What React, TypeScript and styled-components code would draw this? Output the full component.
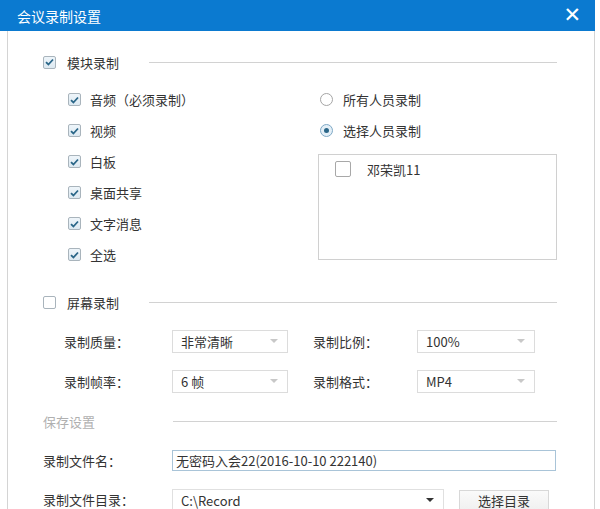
import React from 'react';
import styled, { createGlobalStyle } from 'styled-components';

const GlobalStyle = createGlobalStyle`
  html, body {
    margin: 0;
    padding: 0;
    background: #fff;
  }
  body {
    font-family: 'Noto Sans CJK SC', 'Liberation Sans', sans-serif;
    font-size: 13px;
    color: #333;
  }
`;

const Window = styled.div`
  width: 600px;
  height: 509px;
  overflow: hidden;
  background: #fff;
  display: flex;
  flex-direction: column;
`;

const TitleBar = styled.div`
  width: 595px;
  height: 31px;
  flex-shrink: 0;
  background: #0b7ad0;
  color: #fff;
  display: flex;
  align-items: center;
  justify-content: space-between;
  padding: 0 14px 0 17px;
  box-sizing: border-box;
  font-size: 14px;
`;

const CloseButton = styled.span`
  font-family: 'DejaVu Sans', sans-serif;
  font-size: 21px;
  font-weight: bold;
  line-height: 1;
  cursor: pointer;
`;

const Body = styled.div`
  flex: 1;
  margin-left: 7px;
  width: 588px;
  box-sizing: border-box;
  border-left: 1px solid #d4d4d4;
  border-right: 1px solid #d4d4d4;
  padding: 21px 37px 0 35px;
  display: flex;
  flex-direction: column;
`;

const SectionHeader = styled.div<{ $top?: number }>`
  height: 20px;
  display: flex;
  align-items: center;
  margin-top: ${p => p.$top ?? 0}px;
`;

const SectionTitle = styled.span<{ $muted?: boolean }>`
  color: ${p => (p.$muted ? '#b0b0b0' : '#333')};
  margin-left: ${p => (p.$muted ? 0 : 11)}px;
  white-space: nowrap;
`;

const Rule = styled.div<{ $gap: number }>`
  flex: 1;
  height: 1px;
  background: #d2d2d2;
  margin-left: ${p => p.$gap}px;
`;

const Box = styled.span<{ $checked?: boolean }>`
  width: 13px;
  height: 13px;
  flex-shrink: 0;
  box-sizing: border-box;
  border: 1px solid #a9b4bc;
  border-radius: 2px;
  background: ${p => (p.$checked ? 'linear-gradient(#eef5fa, #dde9f1)' : '#fff')};
  display: inline-flex;
  align-items: center;
  justify-content: center;
`;

function Check({ checked }: { checked?: boolean }) {
  return (
    <Box $checked={checked}>
      {checked && (
        <svg width="9" height="8" viewBox="0 0 9 8">
          <path d="M1 4.2 L3.4 6.5 L8 1.5" fill="none" stroke="#2a6688" strokeWidth="1.8" />
        </svg>
      )}
    </Box>
  );
}

const RadioCircle = styled.span<{ $on?: boolean }>`
  width: 13px;
  height: 13px;
  box-sizing: border-box;
  border-radius: 50%;
  border: 1px solid ${p => (p.$on ? '#7fa9c6' : '#a5a5a5')};
  background: ${p => (p.$on ? '#e4eff7' : '#fff')};
  display: inline-flex;
  align-items: center;
  justify-content: center;
  &::after {
    content: '';
    display: ${p => (p.$on ? 'block' : 'none')};
    width: 5px;
    height: 5px;
    border-radius: 50%;
    background: #2a6688;
  }
`;

const ModuleArea = styled.div`
  display: flex;
  margin-top: 12px;
`;

const LeftColumn = styled.div`
  width: 275px;
  padding-left: 25px;
  box-sizing: border-box;
  display: flex;
  flex-direction: column;
`;

const RightColumn = styled.div`
  flex: 1;
  display: flex;
  flex-direction: column;
`;

const OptionRow = styled.label`
  height: 31px;
  display: flex;
  align-items: center;
  gap: 9px;
  white-space: nowrap;
`;

const RadioRow = styled(OptionRow)`
  padding-left: 2px;
  gap: 10px;
`;

const MemberList = styled.div`
  margin-top: 8px;
  height: 106px;
  border: 1px solid #d0d0d0;
  box-sizing: border-box;
  padding: 6px 0 0 16px;
`;

const MemberRow = styled.div`
  display: flex;
  align-items: center;
  gap: 16px;
  height: 16px;
  ${Box} {
    width: 16px;
    height: 16px;
    border-color: #a8a8a8;
  }
`;

const SettingsRow = styled.div<{ $top: number }>`
  display: flex;
  align-items: center;
  height: 24px;
  margin-top: ${p => p.$top}px;
  padding-left: 21px;
`;

const FieldLabel = styled.span<{ $w: number; $indent?: number }>`
  width: ${p => p.$w}px;
  padding-left: ${p => p.$indent ?? 0}px;
  flex-shrink: 0;
  white-space: nowrap;
`;

const Select = styled.div<{ $w: number }>`
  width: ${p => p.$w}px;
  height: 23px;
  box-sizing: border-box;
  border: 1px solid #dcdcdc;
  display: flex;
  align-items: center;
  justify-content: space-between;
  padding: 0 9px 0 8px;
  flex-shrink: 0;
`;

const Caret = styled.span<{ $dark?: boolean }>`
  width: 0;
  height: 0;
  border-left: 4px solid transparent;
  border-right: 4px solid transparent;
  border-top: 4px solid ${p => (p.$dark ? '#333' : '#c8c8c8')};
`;

const FileRow = styled.div<{ $top: number }>`
  display: flex;
  align-items: center;
  height: 21px;
  margin-top: ${p => p.$top}px;
`;

const TextInput = styled.div`
  flex: 1;
  height: 21px;
  box-sizing: border-box;
  border: 1px solid #a9c4d8;
  display: flex;
  align-items: center;
  padding-left: 3px;
  white-space: nowrap;
  margin-right: 1px;
`;

const PathCombo = styled(Select)`
  height: 21px;
  border-color: #e0e0e0;
  border-bottom: none;
  padding-right: 9px;
`;

const Button = styled.button`
  margin-left: 15px;
  width: 90px;
  height: 24px;
  margin-top: 4px;
  border: 1px solid #d8d8d8;
  border-bottom: none;
  background: linear-gradient(#fafafa, #eeeeee);
  font-family: inherit;
  font-size: 13px;
  color: #333;
  padding: 0 0 4px;
`;

const leftOptions = ['音频（必须录制）', '视频', '白板', '桌面共享', '文字消息', '全选'];

export default function App() {
  return (
    <>
      <GlobalStyle />
      <Window>
        <TitleBar>
          <span>会议录制设置</span>
          <CloseButton>✕</CloseButton>
        </TitleBar>
        <Body>
          <SectionHeader>
            <Check checked />
            <SectionTitle>模块录制</SectionTitle>
            <Rule $gap={30} />
          </SectionHeader>

          <ModuleArea>
            <LeftColumn>
              {leftOptions.map(text => (
                <OptionRow key={text}>
                  <Check checked />
                  <span>{text}</span>
                </OptionRow>
              ))}
            </LeftColumn>
            <RightColumn>
              <RadioRow>
                <RadioCircle />
                <span>所有人员录制</span>
              </RadioRow>
              <RadioRow>
                <RadioCircle $on />
                <span>选择人员录制</span>
              </RadioRow>
              <MemberList>
                <MemberRow>
                  <Check />
                  <span>邓荣凯11</span>
                </MemberRow>
              </MemberList>
            </RightColumn>
          </ModuleArea>

          <SectionHeader $top={22}>
            <Check />
            <SectionTitle>屏幕录制</SectionTitle>
            <Rule $gap={30} />
          </SectionHeader>

          <SettingsRow $top={17}>
            <FieldLabel $w={108}>录制质量：</FieldLabel>
            <Select $w={116}>
              <span>非常清晰</span>
              <Caret />
            </Select>
            <FieldLabel $w={104} $indent={25}>录制比例：</FieldLabel>
            <Select $w={118}>
              <span>100%</span>
              <Caret />
            </Select>
          </SettingsRow>

          <SettingsRow $top={16}>
            <FieldLabel $w={108}>录制帧率：</FieldLabel>
            <Select $w={116}>
              <span>6 帧</span>
              <Caret />
            </Select>
            <FieldLabel $w={104} $indent={25}>录制格式：</FieldLabel>
            <Select $w={118}>
              <span>MP4</span>
              <Caret />
            </Select>
          </SettingsRow>

          <SectionHeader $top={18}>
            <SectionTitle $muted>保存设置</SectionTitle>
            <Rule $gap={78} />
          </SectionHeader>

          <FileRow $top={19}>
            <FieldLabel $w={129}>录制文件名：</FieldLabel>
            <TextInput>无密码入会22(2016-10-10 222140)</TextInput>
          </FileRow>

          <FileRow $top={18}>
            <FieldLabel $w={129}>录制文件目录：</FieldLabel>
            <PathCombo $w={272}>
              <span>C:\Record</span>
              <Caret $dark />
            </PathCombo>
            <Button>选择目录</Button>
          </FileRow>
        </Body>
      </Window>
    </>
  );
}
